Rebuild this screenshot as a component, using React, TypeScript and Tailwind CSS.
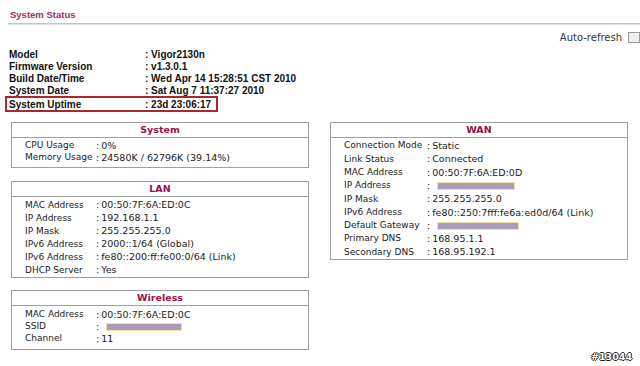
import React from 'react'

type Row = { label: string; value?: string; masked?: number }

const sys: Row[] = [
  { label: 'CPU Usage', value: '0%' },
  { label: 'Memory Usage', value: '24580K / 62796K (39.14%)' },
]

const lan: Row[] = [
  { label: 'MAC Address', value: '00:50:7F:6A:ED:0C' },
  { label: 'IP Address', value: '192.168.1.1' },
  { label: 'IP Mask', value: '255.255.255.0' },
  { label: 'IPv6 Address', value: '2000::1/64 (Global)' },
  { label: 'IPv6 Address', value: 'fe80::200:ff:fe00:0/64 (Link)' },
  { label: 'DHCP Server', value: 'Yes' },
]

const wireless: Row[] = [
  { label: 'MAC Address', value: '00:50:7F:6A:ED:0C' },
  { label: 'SSID', masked: 76 },
  { label: 'Channel', value: '11' },
]

const wan: Row[] = [
  { label: 'Connection Mode', value: 'Static' },
  { label: 'Link Status', value: 'Connected' },
  { label: 'MAC Address', value: '00:50:7F:6A:ED:0D' },
  { label: 'IP Address', masked: 78 },
  { label: 'IP Mask', value: '255.255.255.0' },
  { label: 'IPv6 Address', value: 'fe80::250:7fff:fe6a:ed0d/64 (Link)' },
  { label: 'Default Gateway', masked: 82 },
  { label: 'Primary DNS', value: '168.95.1.1' },
  { label: 'Secondary DNS', value: '168.95.192.1' },
]

function Box({ title, rows, labelW, rowH, pad }: { title: string; rows: Row[]; labelW: string; rowH: string; pad: string }) {
  return (
    <div className="border border-[#a0a0a0] bg-white">
      <div className="h-[15px] border-b border-[#a0a0a0] flex items-center justify-center text-[9.5px] font-bold text-[#9b1048]">
        {title}
      </div>
      <div className={`pl-[13px] ${pad}`}>
        {rows.map((r, i) => (
          <div key={i} className={`flex items-center ${rowH} text-[9.5px] text-[#222]`}>
            <span className={`${labelW} shrink-0 whitespace-nowrap text-[9px]`}>{r.label}</span>
            <span className="whitespace-nowrap">:</span>
            {r.masked ? (
              <span
                className="ml-[7px] h-[8px] bg-[#a99bb9] border border-[#efe6a6]"
                style={{ width: r.masked }}
              />
            ) : (
              <span className="ml-[2px] whitespace-nowrap">{r.value}</span>
            )}
          </div>
        ))}
      </div>
    </div>
  )
}

export default function App() {
  const info = [
    ['Model', 'Vigor2130n'],
    ['Firmware Version', 'v1.3.0.1'],
    ['Build Date/Time', 'Wed Apr 14 15:28:51 CST 2010'],
    ['System Date', 'Sat Aug 7 11:37:27 2010'],
  ]
  return (
    <div className="relative w-[640px] h-[366px] overflow-hidden bg-white" style={{ fontFamily: '"DejaVu Sans", Verdana, sans-serif' }}>
      <div className="pl-[8px] pt-[7px]">
        <div className="pl-[2px] h-[15px] leading-[15px] text-[9.5px] font-bold text-[#98305d]" style={{ fontFamily: '"Liberation Sans", Arial, sans-serif' }}>
          System Status
        </div>
        <div className="mt-[1px] h-[2px] bg-[#c4c4c4] border-b border-[#e2e2e2]" />
      </div>

      <div className="flex justify-end items-center h-[14px] mt-[5px] text-[10px] text-[#333]">
        <span>Auto-refresh</span>
        <span className="ml-[6px] w-[12px] h-[11px] border border-[#9a9a9a] bg-[#eeeeee]" />
      </div>

      <div className="mt-[4px] text-[10px] font-bold text-[#111]" style={{ fontFamily: '"Liberation Sans", Arial, sans-serif' }}>
        {info.map(([k, v]) => (
          <div key={k} className="flex items-center h-[12px] pl-[9px]">
            <span className="w-[136px] shrink-0">{k}</span>
            <span>: {v}</span>
          </div>
        ))}
        <div className="ml-[5px] w-[213px] h-[16px] border-2 border-[#a8282c] flex items-center pl-[2px]">
          <span className="w-[136px] shrink-0">System Uptime</span>
          <span>: 23d 23:06:17</span>
        </div>
      </div>

      <div className="flex mt-[10px] pl-[11px] gap-[21px]">
        <div className="w-[298px] flex flex-col">
          <Box title="System" rows={sys} labelW="w-[71px]" rowH="h-[12px]" pad="pt-[2px] pb-[3px]" />
          <div className="h-[13px]" />
          <Box title="LAN" rows={lan} labelW="w-[71px]" rowH="h-[13px]" pad="pt-[2px]" />
          <div className="h-[12px]" />
          <Box title="Wireless" rows={wireless} labelW="w-[71px]" rowH="h-[12px]" pad="pt-[3px] pb-[4px]" />
        </div>
        <div className="w-[298px]">
          <Box title="WAN" rows={wan} labelW="w-[83px]" rowH="h-[13.3px]" pad="pt-[1.5px]" />
        </div>
      </div>

      <div
        className="absolute right-[8px] bottom-[2px] text-[9.5px] font-bold text-white"
        style={{ fontFamily: '"DejaVu Sans", sans-serif', textShadow: '1px 0 0 #222, -1px 0 0 #222, 0 1px 0 #222, 0 -1px 0 #222' }}
      >
        #13044
      </div>
    </div>
  )
}
